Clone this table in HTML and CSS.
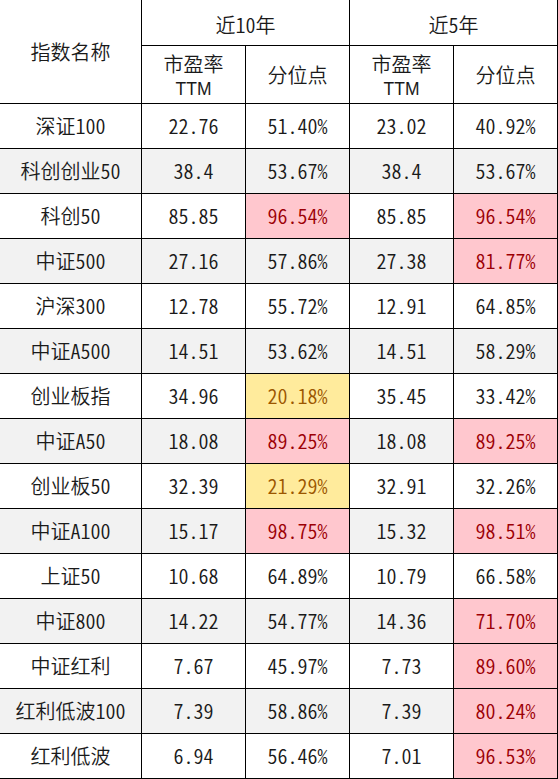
FILE: index.html
```html
<!DOCTYPE html>
<html lang="zh-CN">
<head>
<meta charset="utf-8">
<title>指数估值</title>
<link rel="stylesheet" href="styles.css">
</head>
<body>
<div class="sheet">
  <div class="c h name">指数名称</div>
  <div class="c h span2">近10年</div>
  <div class="c h span2">近5年</div>
  <div class="c h two"><span class="ln">市盈率</span><span class="ln ttm">TTM</span></div>
  <div class="c h">分位点</div>
  <div class="c h two"><span class="ln">市盈率</span><span class="ln ttm">TTM</span></div>
  <div class="c h">分位点</div>

  <div class="c">深证100</div><div class="c">22.76</div><div class="c">51.40%</div><div class="c">23.02</div><div class="c">40.92%</div>
  <div class="c g">科创创业50</div><div class="c g">38.4</div><div class="c g">53.67%</div><div class="c g">38.4</div><div class="c g">53.67%</div>
  <div class="c">科创50</div><div class="c">85.85</div><div class="c bad">96.54%</div><div class="c">85.85</div><div class="c bad">96.54%</div>
  <div class="c g">中证500</div><div class="c g">27.16</div><div class="c g">57.86%</div><div class="c g">27.38</div><div class="c bad">81.77%</div>
  <div class="c">沪深300</div><div class="c">12.78</div><div class="c">55.72%</div><div class="c">12.91</div><div class="c">64.85%</div>
  <div class="c g">中证A500</div><div class="c g">14.51</div><div class="c g">53.62%</div><div class="c g">14.51</div><div class="c g">58.29%</div>
  <div class="c">创业板指</div><div class="c">34.96</div><div class="c mid">20.18%</div><div class="c">35.45</div><div class="c">33.42%</div>
  <div class="c g">中证A50</div><div class="c g">18.08</div><div class="c bad">89.25%</div><div class="c g">18.08</div><div class="c bad">89.25%</div>
  <div class="c">创业板50</div><div class="c">32.39</div><div class="c mid">21.29%</div><div class="c">32.91</div><div class="c">32.26%</div>
  <div class="c g">中证A100</div><div class="c g">15.17</div><div class="c bad">98.75%</div><div class="c g">15.32</div><div class="c bad">98.51%</div>
  <div class="c">上证50</div><div class="c">10.68</div><div class="c">64.89%</div><div class="c">10.79</div><div class="c">66.58%</div>
  <div class="c g">中证800</div><div class="c g">14.22</div><div class="c g">54.77%</div><div class="c g">14.36</div><div class="c bad">71.70%</div>
  <div class="c">中证红利</div><div class="c">7.67</div><div class="c">45.97%</div><div class="c">7.73</div><div class="c bad">89.60%</div>
  <div class="c g">红利低波100</div><div class="c g">7.39</div><div class="c g">58.86%</div><div class="c g">7.39</div><div class="c bad">80.24%</div>
  <div class="c">红利低波</div><div class="c">6.94</div><div class="c">56.46%</div><div class="c">7.01</div><div class="c bad">96.53%</div>
</div>
</body>
</html>
```
FILE: styles.css
```css
html, body {
  margin: 0;
  padding: 0;
  background: #fff;
}
.sheet {
  width: 558px;
  height: 779px;
  box-sizing: border-box;
  padding: 0 1px 1px 0;
  background: #000;
  display: grid;
  grid-template-columns: 141px repeat(4, 103px);
  grid-template-rows: 45px 57px repeat(15, 44px);
  gap: 1px;
  font-family: "Noto Sans CJK SC", "Noto Sans", sans-serif;
  font-feature-settings: "hwid" 1;
  font-size: 20px;
  font-weight: 350;
  color: #1a1a1a;
}
.c {
  background: #fff;
  display: flex;
  align-items: center;
  justify-content: center;
  text-align: center;
  line-height: 24px;
  white-space: nowrap;
}
.h.name {
  grid-row: span 2;
}
.h.span2 {
  grid-column: span 2;
  padding-top: 4px;
}
.h.two {
  flex-direction: column;
  padding-top: 3px;
}
.ln {
  display: block;
  line-height: 25px;
}
.ttm {
  font-family: "Liberation Sans", Arial, sans-serif;
  font-weight: 400;
  font-size: 19px;
  transform: scaleX(0.92);
}
.g {
  background: #f2f2f2;
}
.bad {
  background: #ffc7ce;
  color: #9c0006;
}
.mid {
  background: #ffeb9c;
  color: #9c5700;
}
```
